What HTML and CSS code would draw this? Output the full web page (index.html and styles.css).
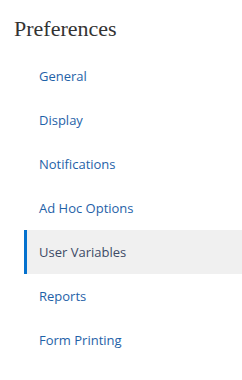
FILE: index.html
```html
<!DOCTYPE html>
<html lang="en">
<head>
    <meta charset="UTF-8">
    <meta name="viewport" content="width=device-width, initial-scale=1.0">
    <title>Preferences</title>
    <link rel="stylesheet" href="styles.css">
</head>
<body>
    <h1 class="title">Preferences</h1>

    <ul class="pref-list">
        <li><a href="#">General</a></li>
        <li><a href="#">Display</a></li>
        <li><a href="#">Notifications</a></li>
        <li><a href="#">Ad Hoc Options</a></li>
        <li class="selected"><a href="#">User Variables</a></li>
        <li><a href="#">Reports</a></li>
        <li><a href="#">Form Printing</a></li>
    </ul>
</body>
</html>
```

FILE: styles.css
```css
body {
    margin: 0;
    background-color: #ffffff;
    font-family: "Open Sans", Arial, sans-serif;
}

.title {
    margin: 0;
    padding: 15px 0 0 14px;
    height: 39px;
    line-height: 28px;
    font-family: "Liberation Serif", "DejaVu Serif", serif;
    font-size: 22px;
    font-weight: normal;
    color: #333333;
}

.pref-list {
    list-style: none;
    margin: 0 0 0 24px;
    padding: 0;
}

.pref-list li {
    height: 44px;
    display: flex;
    align-items: center;
    border-left: 3px solid transparent;
    padding-left: 12px;
}

.pref-list a {
    color: #1f62a8;
    text-decoration: none;
    font-size: 13px;
}

.pref-list li.selected {
    background-color: #f0f0f0;
    border-left-color: #0572ce;
}

.pref-list li.selected a {
    color: #3d4a66;
}
```
